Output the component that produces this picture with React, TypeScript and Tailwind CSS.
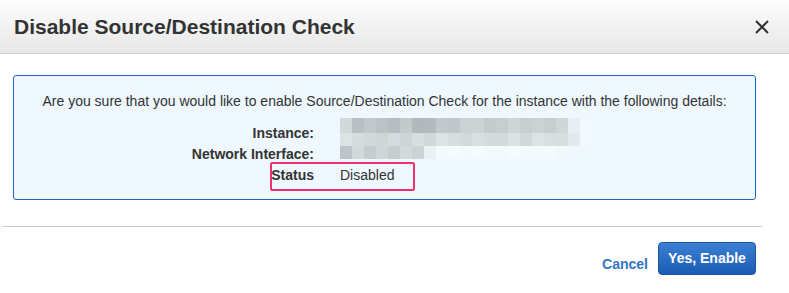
import React from "react";

const rowA = ["#d3d8db","#b9bfc3","#c3c8cc","#bcc2c6","#b7bdc1","#c4c9cc","#b2b8bc","#b4babe","#c4c9cd","#c1c6ca","#ccd1d4","#cdd2d5","#c5cacd","#c8cdd0","#cfd4d7","#c8cdd0","#ccd1d4","#c9ced1","#d1d6d9","#e8eef1","#f3f9fc"];
const rowB = ["#dde2e5","#d6dbde","#d2d7da","#d0d5d8","#d6dbdf","#cfd4d7","#d8dde0","#d3d8db","#dde2e5","#d8dde0","#d4d9dc","#d9dee1","#d5dadd","#d4d9dc","#dce1e4","#d3d8db","#dde2e5","#d9dee1","#d8dde0","#e3e9ec","#f3f9fc"];
const rowC = ["#bfc4c8","#d3d8db","#c7ccd0","#d0d5d8","#c8cdd0","#d4d9dc","#cdd2d6","#eaf2f6","#f3fafd","#f5fbfe","#f4fafd","#f5fbfe","#f4fafd","#f3f9fc","#f5fbfe","#f4fafd","#f3f9fc","#f4fafd","#f2f8fb","#eef8fe","#eef8fe"];

function Mosaic() {
  const rows: [string[], number][] = [[rowA, 15], [rowB, 13], [rowC, 13]];
  return (
    <div className="flex flex-col -mt-[5px]">
      {rows.map(([r, h], i) => (
        <div key={i} className="flex">
          {r.map((c, j) => (
            <div key={j} className="w-[12px]" style={{ backgroundColor: c, height: h }} />
          ))}
        </div>
      ))}
    </div>
  );
}

export default function App() {
  return (
    <div className="w-[789px] h-[293px] bg-white text-[#333] font-['Liberation_Sans',Arial,sans-serif] overflow-hidden">
      <div className="h-[54px] border-b border-[#cdcdcd] bg-gradient-to-b from-[#fdfdfd] to-[#e7e7e7] flex items-center justify-between pl-[14px] pr-[20px]">
        <h1 className="text-[21px] font-bold text-[#333] leading-none">Disable Source/Destination Check</h1>
        <svg width="14" height="14" viewBox="0 0 14 14" className="mt-[1px]">
          <path d="M1 1 L13 13 M13 1 L1 13" stroke="#333" strokeWidth="2" />
        </svg>
      </div>
      <div className="pt-[21px] pl-[13px] pr-[33px]">
        <div className="relative h-[125px] border border-[#1f64c2] rounded-[3px] bg-[#eef8fe] pt-[17px]">
          <p className="text-[14px] leading-[16px] text-center text-[#333]">
            Are you sure that you would like to enable Source/Destination Check for the instance with the following details:
          </p>
          <div className="mt-[14px] ml-[136px] grid grid-cols-[164px_auto] gap-x-[26px] auto-rows-[21px] text-[14px] leading-[21px]">
            <div className="text-right font-bold">Instance:</div>
            <div className="row-span-2"><Mosaic /></div>
            <div className="text-right font-bold">Network Interface:</div>
            <div className="text-right font-bold">Status</div>
            <div>Disabled</div>
          </div>
          <div className="absolute left-[256px] top-[86px] w-[145px] h-[29px] border-[2.5px] border-[#f0336d] rounded-[2px]" />
        </div>
      </div>
      <div className="mt-[26px] ml-[3px] w-[759px] h-px bg-[#c9c9c9]" />
      <div className="mt-[15px] pr-[33px] flex justify-end items-center gap-[10px]">
        <span className="text-[14px] font-bold text-[#2f77c8] mt-[11px]">Cancel</span>
        <button className="w-[98px] h-[33px] rounded-[4px] border border-[#1b56a6] bg-gradient-to-b from-[#3a80d4] to-[#1c5cb4] text-white text-[14px] font-bold">
          Yes, Enable
        </button>
      </div>
    </div>
  );
}
